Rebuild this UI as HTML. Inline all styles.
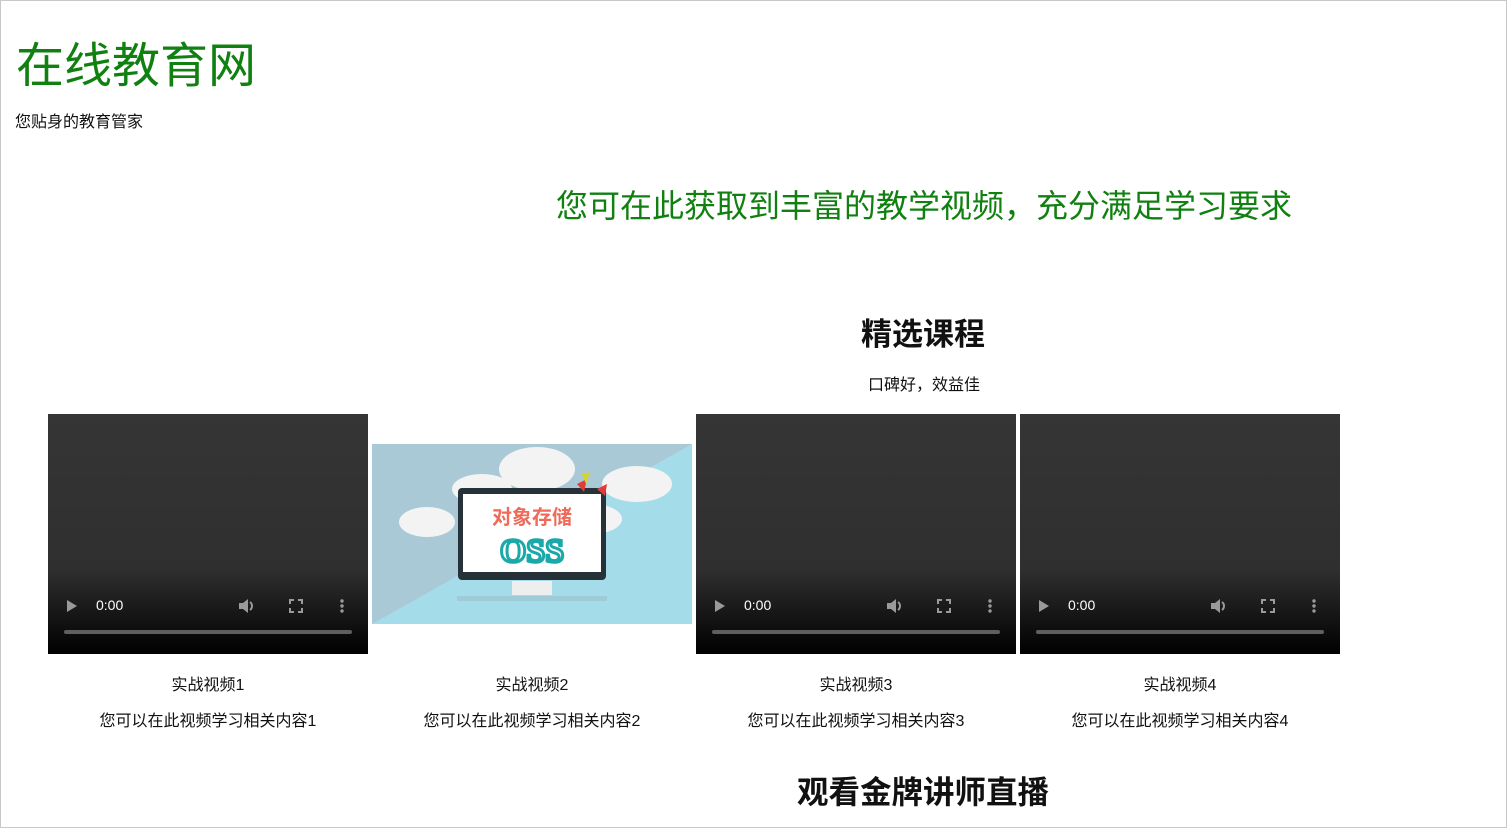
<!DOCTYPE html>
<html><head><meta charset="utf-8"><style>
*{margin:0;padding:0;box-sizing:border-box}
body{width:1507px;height:828px;overflow:hidden;background:#fff;font-family:"Liberation Sans","Noto Sans CJK SC",sans-serif;position:relative;}
.frame{position:absolute;left:0;top:0;width:1507px;height:828px;border:1px solid #c8c8c8;pointer-events:none}
.a{position:absolute;white-space:nowrap}
.g{color:#108010}
.vid{position:absolute;top:414px;width:320px;height:240px;background:linear-gradient(#353535 0%,#2f2f2f 65%,#000 100%)}
.vid .play{position:absolute;left:19px;top:186px;width:0;height:0;border-left:10px solid #9a9a9a;border-top:6px solid transparent;border-bottom:6px solid transparent}
.vid .t{position:absolute;left:48px;top:183px;color:#fff;font-size:14px}
.vid .bar{position:absolute;left:16px;right:16px;top:216px;height:4px;border-radius:2px;background:#5f5f5f}
.vid svg{position:absolute;top:184px}
.cap{position:absolute;width:320px;text-align:center;font-size:16px;color:#111}
</style></head><body>
<div class="a g" style="left:16px;top:37px;font-size:48px;line-height:60px">在线教育网</div>
<div class="a" style="left:15px;top:113px;font-size:16px;line-height:20px;color:#111">您贴身的教育管家</div>
<div class="a g" style="left:556px;top:186px;font-size:32px;line-height:40px">您可在此获取到丰富的教学视频，充分满足学习要求</div>
<div class="a" style="left:0;width:1846px;text-align:center;top:315px;font-size:31px;font-weight:bold;line-height:40px;color:#111">精选课程</div>
<div class="a" style="left:0;width:1848px;text-align:center;top:376px;font-size:16px;line-height:20px;color:#111">口碑好，效益佳</div>

<div class="vid" style="left:48px"><div class="play"></div><div class="t">0:00</div>
<svg style="left:190px" width="20" height="16" viewBox="0 0 20 16"><path d="M1 5h4l5-4v14l-5-4H1z" fill="#9a9a9a"/><path d="M12 4a5 5 0 0 1 0 8" stroke="#9a9a9a" stroke-width="2" fill="none"/></svg>
<svg style="left:240px" width="16" height="16" viewBox="0 0 16 16"><path d="M2 6V2h4M10 2h4v4M14 10v4h-4M6 14H2v-4" stroke="#9a9a9a" stroke-width="2" fill="none"/></svg>
<svg style="left:292px" width="4" height="16" viewBox="0 0 4 16"><circle cx="2" cy="3" r="1.7" fill="#9a9a9a"/><circle cx="2" cy="8" r="1.7" fill="#9a9a9a"/><circle cx="2" cy="13" r="1.7" fill="#9a9a9a"/></svg>
<div class="bar"></div></div>

<svg style="position:absolute;left:372px;top:444px" width="320" height="180" viewBox="0 0 320 180">
<rect width="320" height="180" fill="#a9c9d6"/>
<polygon points="320,0 320,180 0,180" fill="#a5dcea"/>
<g fill="#f3f3f3"><ellipse cx="55" cy="78" rx="28" ry="15"/><ellipse cx="165" cy="25" rx="38" ry="22"/><ellipse cx="110" cy="45" rx="30" ry="15"/><ellipse cx="265" cy="40" rx="35" ry="18"/><ellipse cx="220" cy="75" rx="30" ry="15"/></g>
<rect x="86" y="44" width="148" height="92" rx="4" fill="#263238"/>
<rect x="91" y="50" width="138" height="78" fill="#fff"/>
<rect x="140" y="137" width="40" height="14" fill="#eee"/><rect x="85" y="152" width="150" height="5" fill="#9ecbd8"/>
<text x="160" y="80" text-anchor="middle" font-size="20" font-weight="bold" fill="#f06a5a" font-family="Noto Sans CJK SC,sans-serif">对象存储</text>
<text x="160" y="118" text-anchor="middle" font-size="34" font-weight="bold" fill="#fff" stroke="#1aa8a8" stroke-width="3" font-family="Liberation Serif,serif">OSS</text>
<g fill="#e53935"><polygon points="205,40 215,35 212,48"/><polygon points="225,45 235,40 233,52"/></g>
<polygon points="210,30 218,28 214,40" fill="#d4d42a"/>
</svg>

<div class="vid" style="left:696px"><div class="play"></div><div class="t">0:00</div>
<svg style="left:190px" width="20" height="16" viewBox="0 0 20 16"><path d="M1 5h4l5-4v14l-5-4H1z" fill="#9a9a9a"/><path d="M12 4a5 5 0 0 1 0 8" stroke="#9a9a9a" stroke-width="2" fill="none"/></svg>
<svg style="left:240px" width="16" height="16" viewBox="0 0 16 16"><path d="M2 6V2h4M10 2h4v4M14 10v4h-4M6 14H2v-4" stroke="#9a9a9a" stroke-width="2" fill="none"/></svg>
<svg style="left:292px" width="4" height="16" viewBox="0 0 4 16"><circle cx="2" cy="3" r="1.7" fill="#9a9a9a"/><circle cx="2" cy="8" r="1.7" fill="#9a9a9a"/><circle cx="2" cy="13" r="1.7" fill="#9a9a9a"/></svg>
<div class="bar"></div></div>

<div class="vid" style="left:1020px"><div class="play"></div><div class="t">0:00</div>
<svg style="left:190px" width="20" height="16" viewBox="0 0 20 16"><path d="M1 5h4l5-4v14l-5-4H1z" fill="#9a9a9a"/><path d="M12 4a5 5 0 0 1 0 8" stroke="#9a9a9a" stroke-width="2" fill="none"/></svg>
<svg style="left:240px" width="16" height="16" viewBox="0 0 16 16"><path d="M2 6V2h4M10 2h4v4M14 10v4h-4M6 14H2v-4" stroke="#9a9a9a" stroke-width="2" fill="none"/></svg>
<svg style="left:292px" width="4" height="16" viewBox="0 0 4 16"><circle cx="2" cy="3" r="1.7" fill="#9a9a9a"/><circle cx="2" cy="8" r="1.7" fill="#9a9a9a"/><circle cx="2" cy="13" r="1.7" fill="#9a9a9a"/></svg>
<div class="bar"></div></div>

<div class="cap" style="left:48px;top:671px">实战视频1</div>
<div class="cap" style="left:48px;top:707px">您可以在此视频学习相关内容1</div>
<div class="cap" style="left:372px;top:671px">实战视频2</div>
<div class="cap" style="left:372px;top:707px">您可以在此视频学习相关内容2</div>
<div class="cap" style="left:696px;top:671px">实战视频3</div>
<div class="cap" style="left:696px;top:707px">您可以在此视频学习相关内容3</div>
<div class="cap" style="left:1020px;top:671px">实战视频4</div>
<div class="cap" style="left:1020px;top:707px">您可以在此视频学习相关内容4</div>

<div class="a" style="left:0;width:1846px;text-align:center;top:772px;font-size:31.5px;font-weight:bold;line-height:40px;color:#111">观看金牌讲师直播</div>
<div class="frame"></div>
</body></html>
